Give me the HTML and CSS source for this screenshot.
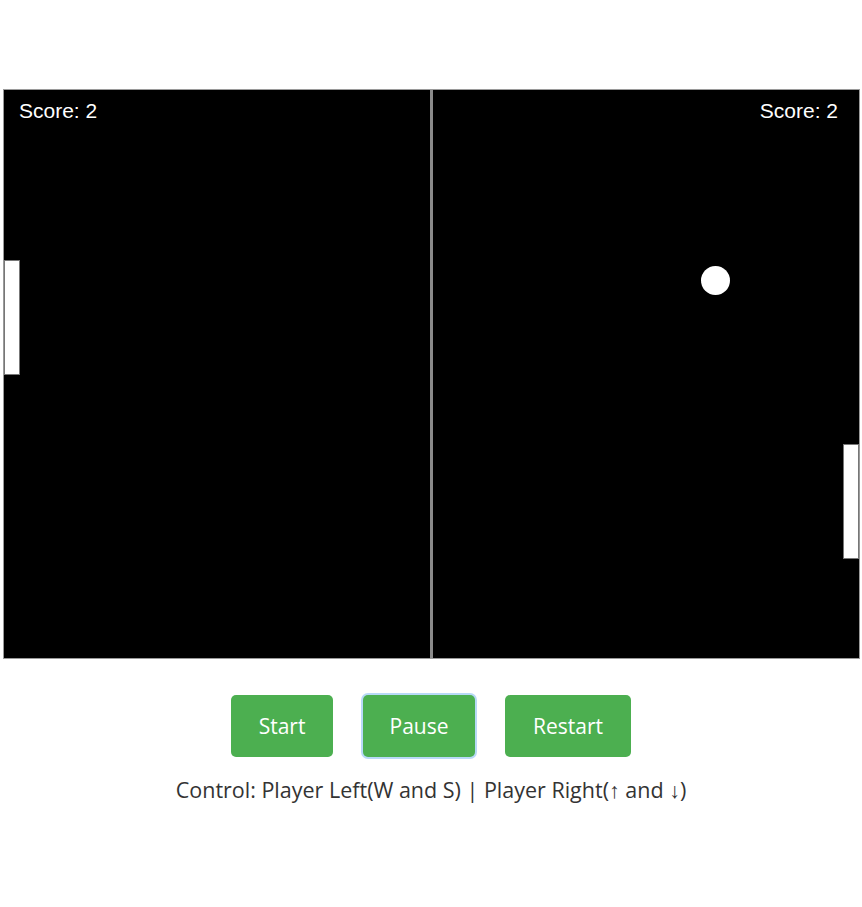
FILE: index.html
```html
<!DOCTYPE html>
<html>
<head>
<meta charset="utf-8">
<link rel="stylesheet" href="styles.css">
</head>
<body>
<main class="page">
  <div class="board">
    <div class="score score-left">Score: 2</div>
    <div class="score score-right">Score: 2</div>
    <div class="net"></div>
    <div class="paddle paddle-left"></div>
    <div class="paddle paddle-right"></div>
    <div class="ball"></div>
  </div>
  <div class="buttons">
    <button class="btn btn-start">Start</button>
    <button class="btn btn-pause btn-focus">Pause</button>
    <button class="btn btn-restart">Restart</button>
  </div>
  <p class="controls">Control: Player Left(W and S) | Player Right(↑ and ↓)</p>
</main>
</body>
</html>
```
FILE: styles.css
```css
html, body {
  margin: 0;
  padding: 0;
  background: #fff;
}
.page {
  display: flex;
  flex-direction: column;
  align-items: center;
  padding-top: 89px;
}
.board {
  position: relative;
  box-sizing: border-box;
  width: 857px;
  height: 570px;
  margin-left: 1px;
  background: #000;
  border: 1px solid #9a9a9a;
  overflow: hidden;
}
.score {
  position: absolute;
  top: 9px;
  color: #fff;
  font-family: "Liberation Sans", Arial, sans-serif;
  font-size: 21px;
}
.score-left { left: 15px; }
.score-right { right: 21px; }
.net {
  position: absolute;
  left: 426px;
  top: 0;
  width: 3px;
  height: 100%;
  background: #8a8a8a;
}
.paddle {
  position: absolute;
  width: 14px;
  height: 113px;
  background: #fff;
  box-shadow: 0 0 0 1px #777;
}
.paddle-left { left: 1px; top: 171px; }
.paddle-right { left: 840px; top: 355px; }
.ball {
  position: absolute;
  left: 697px;
  top: 176px;
  width: 29px;
  height: 29px;
  border-radius: 50%;
  background: #fff;
}
.buttons {
  display: flex;
  gap: 30px;
  margin-top: 36px;
}
.btn {
  box-sizing: border-box;
  height: 62px;
  padding: 0;
  border: none;
  border-radius: 5px;
  background: #4caf50;
  color: #fff;
  font-family: "Open Sans", "Noto Sans", sans-serif;
  font-size: 21px;
}
.btn-start { width: 102px; }
.btn-pause { width: 112px; }
.btn-restart { width: 126px; }
.btn-focus {
  box-shadow: 0 0 0 2px #b8d9f7;
}
.controls {
  margin: 18px 0 0;
  font-family: "Open Sans", "Noto Sans", sans-serif;
  font-size: 21.5px;
  color: #333;
}
```
